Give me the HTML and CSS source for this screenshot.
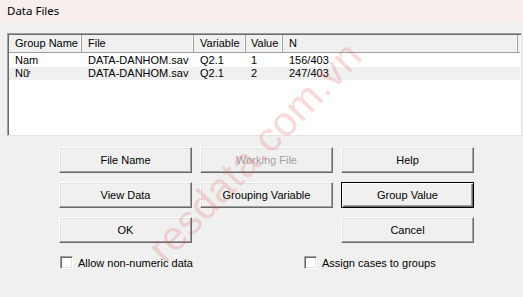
FILE: index.html
```html
<!DOCTYPE html>
<html>
<head>
<meta charset="utf-8">
<link rel="stylesheet" href="styles.css">
</head>
<body>
<div class="window">
  <div class="titlebar">Data Files</div>
  <div class="content">
    <div class="list">
      <div class="row head">
        <div class="c c1">Group Name</div>
        <div class="c c2">File</div>
        <div class="c c3">Variable</div>
        <div class="c c4">Value</div>
        <div class="c c5">N</div>
      </div>
      <div class="row">
        <div class="c c1">Nam</div>
        <div class="c c2">DATA-DANHOM.sav</div>
        <div class="c c3">Q2.1</div>
        <div class="c c4">1</div>
        <div class="c c5">156/403</div>
      </div>
      <div class="row alt">
        <div class="c c1">Nữ</div>
        <div class="c c2">DATA-DANHOM.sav</div>
        <div class="c c3">Q2.1</div>
        <div class="c c4">2</div>
        <div class="c c5">247/403</div>
      </div>
    </div>
    <div class="buttons">
      <button class="btn">File Name</button>
      <button class="btn disabled">Working File</button>
      <button class="btn">Help</button>
      <button class="btn">View Data</button>
      <button class="btn">Grouping Variable</button>
      <button class="btn default">Group Value</button>
      <button class="btn">OK</button>
      <span></span>
      <button class="btn">Cancel</button>
    </div>
    <div class="checks">
      <label class="check"><span class="box"></span>Allow non-numeric data</label>
      <label class="check second"><span class="box"></span>Assign cases to groups</label>
    </div>
  </div>
  <div class="watermark">resdata.com.vn</div>
</div>
</body>
</html>
```
FILE: styles.css
```css
html, body {
  margin: 0;
  padding: 0;
}
body {
  width: 523px;
  height: 297px;
  overflow: hidden;
  background: #f0f0f0;
  font-family: "Liberation Sans", Arial, sans-serif;
  font-size: 11px;
  color: #000;
}
.window {
  position: relative;
  width: 523px;
  height: 297px;
  overflow: hidden;
}
.titlebar {
  height: 22px;
  background: #f9eeee;
  padding-left: 7px;
  line-height: 21px;
  font-family: "Noto Sans", "Open Sans", sans-serif;
  font-size: 11.5px;
  box-sizing: border-box;
}
.content {
  padding: 11px 0 0 7px;
}
.list {
  width: 515px;
  height: 103px;
  box-sizing: border-box;
  background: #fff;
  border-top: 1px solid #a0a0a0;
  border-left: 1px solid #a0a0a0;
  border-right: 1px solid #e3e3e3;
  border-bottom: 1px solid #e3e3e3;
  box-shadow: inset 1px 1px 0 #696969;
  padding: 1px 1px 0 1px;
}
.row {
  display: flex;
  height: 13px;
  line-height: 13px;
  white-space: nowrap;
}
.row.head {
  height: 18px;
  line-height: 17px;
  background: #f0f0f0;
  border-bottom: 1px solid #a0a0a0;
  margin-bottom: 1px;
  box-sizing: border-box;
}
.row.alt {
  background: #f0f0f0;
}
.c {
  box-sizing: border-box;
  padding-left: 6px;
  overflow: hidden;
}
.head .c {
  border-right: 1px solid #a0a0a0;
  box-shadow: inset -1px 0 0 #ffffff;
}
.c1 { width: 73px; }
.c2 { width: 112px; }
.c3 { width: 52px; }
.c4 { width: 37px; padding-left: 5px; }
.c5 { flex: 1; }
.head .c5 { margin-right: 2px; }
.buttons {
  display: grid;
  grid-template-columns: 133px 133px 133px;
  column-gap: 8px;
  row-gap: 9px;
  margin: 11px 0 0 52px;
}
.btn {
  height: 26px;
  box-sizing: border-box;
  background: #f0f0f0;
  font-family: "Liberation Sans", Arial, sans-serif;
  font-size: 11px;
  color: #000;
  padding: 0;
  border-top: 1px solid #ffffff;
  border-left: 1px solid #ffffff;
  border-right: 1px solid #696969;
  border-bottom: 1px solid #696969;
  box-shadow: inset -1px -1px 0 #a0a0a0, inset 1px 1px 0 #e3e3e3;
}
.btn.disabled {
  color: #a0a0a0;
}
.btn.default {
  border: 1px solid #000;
  box-shadow: inset 1px 1px 0 #ffffff, inset -1px -1px 0 #696969, inset -2px -2px 0 #a0a0a0;
}
.checks {
  display: flex;
  margin: 13px 0 0 53px;
}
.check {
  display: flex;
  align-items: center;
  height: 13px;
}
.check.second {
  margin-left: 111px;
}
.box {
  width: 13px;
  height: 13px;
  box-sizing: border-box;
  background: #fff;
  border-top: 1px solid #a0a0a0;
  border-left: 1px solid #a0a0a0;
  border-right: 1px solid #ffffff;
  border-bottom: 1px solid #ffffff;
  box-shadow: inset 1px 1px 0 #696969, inset -1px -1px 0 #e3e3e3;
  margin-right: 5px;
}
.watermark {
  position: absolute;
  left: 255px;
  top: 152px;
  transform: translate(-50%, -50%) rotate(-46deg);
  font-family: "Liberation Sans", Arial, sans-serif;
  font-size: 41px;
  color: rgba(225, 90, 90, 0.24);
  white-space: nowrap;
  pointer-events: none;
  letter-spacing: 0.5px;
}
```
